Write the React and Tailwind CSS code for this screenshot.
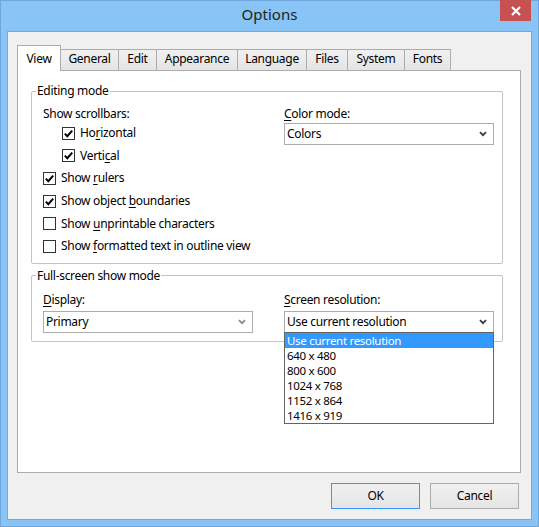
import { useState } from "react";

const tabs = [
  { name: "View", w: "w-[44px]" },
  { name: "General", w: "w-[58px]" },
  { name: "Edit", w: "w-[38px]" },
  { name: "Appearance", w: "w-[81px]" },
  { name: "Language", w: "w-[69px]" },
  { name: "Files", w: "w-[41px]" },
  { name: "System", w: "w-[57px]" },
  { name: "Fonts", w: "w-[46px]" },
];

const resolutions = ["Use current resolution", "640 x 480", "800 x 600", "1024 x 768", "1152 x 864", "1416 x 919"];

// label with one underlined access key
function Key({ text, at }) {
  return (
    <>
      {text.slice(0, at)}
      <span className="underline underline-offset-[2px] decoration-[1px]">{text[at]}</span>
      {text.slice(at + 1)}
    </>
  );
}

function Check({ checked, indent, text, at }) {
  return (
    <div className={`h-[22.6px] flex items-center gap-[5px] ${indent ? "pl-[19px]" : ""}`}>
      <span className="w-[13px] h-[13px] border border-[#333333] bg-white flex items-center justify-center shrink-0">
        {checked && (
          <svg width="11" height="11" viewBox="0 0 11 11">
            <path d="M1.8 5.6 L4.3 8.2 L9.2 2.6" stroke="#000" strokeWidth="2" fill="none" />
          </svg>
        )}
      </span>
      <span className="leading-[16px]">
        <Key text={text} at={at} />
      </span>
    </div>
  );
}

function Select({ value, arrow = "#3c3c3c", children }) {
  return (
    <div className="relative w-[210px] h-[22px] border border-[#abadb3] bg-white flex items-center pl-[2px] pr-[6px]">
      <span className="flex-1 leading-[16px]">{value}</span>
      <svg width="8" height="6" viewBox="0 0 8 6">
        <path d="M1 1.2 L4 4.2 L7 1.2" stroke={arrow} strokeWidth="1.8" fill="none" />
      </svg>
      {children}
    </div>
  );
}

export default function App() {
  const [tab, setTab] = useState("View");
  const [res, setRes] = useState(0);

  return (
    <div className="w-[539px] h-[527px] border border-[#6fa5d8] bg-[#88c4f5] flex flex-col px-[6px] pb-[6px] relative font-['Noto_Sans',sans-serif] text-[12px] tracking-[-0.3px] text-black select-none">
      <div className="h-[30px] flex items-center justify-center">
        <span className="text-[15px] text-[#222] leading-[20px] -mt-[4px] tracking-normal">Options</span>
      </div>
      <div className="absolute top-[-1px] right-[7px] w-[31px] h-[21px] bg-[#c75050] flex items-center justify-center">
        <svg width="10" height="10" viewBox="0 0 10 10">
          <path d="M1 1 L9 9 M9 1 L1 9" stroke="#fff" strokeWidth="2.2" />
        </svg>
      </div>

      <div className="flex-1 border border-[#79a6d2] bg-[#f0f0f0] flex flex-col pl-[9px] pt-[13px] pb-[10px]">
        <div className="flex items-end h-[25px]">
          {tabs.map((t, i) => {
            const on = t.name === tab;
            return (
              <button
                key={t.name}
                onClick={() => setTab(t.name)}
                className={`${t.w} flex items-center justify-center border-t border-r border-[#acacac] ${i === 0 ? "border-l" : ""} ${
                  on
                    ? "h-[26px] -mb-[1px] bg-white relative z-10"
                    : "h-[21px] pb-[2px] bg-gradient-to-b from-[#f0f0f0] to-[#e5e5e5]"
                }`}
              >
                <span className="leading-[16px]">{t.name}</span>
              </button>
            );
          })}
        </div>

        <div className="w-[504px] h-[403px] border border-[#acacac] bg-white pl-[13px] pt-[12px]">
          <fieldset className="w-[472px] border border-[#c4c4c4] rounded-[2px] m-0 p-0">
            <legend className="ml-[4px] px-[1px] leading-[16px]">Editing mode</legend>
            <div className="grid grid-cols-[241px_210px] pl-[11px] pt-[6px] pb-[5px]">
              <div>
                <div className="h-[17px] leading-[17px]">Show scrollbars:</div>
                <Check checked indent text="Horizontal" at={2} />
                <Check checked indent text="Vertical" at={5} />
                <Check checked text="Show rulers" at={5} />
                <Check checked text="Show object boundaries" at={12} />
                <Check text="Show unprintable characters" at={5} />
                <Check text="Show formatted text in outline view" at={5} />
              </div>
              <div>
                <div className="h-[17px] leading-[17px]">
                  <Key text="Color mode:" at={0} />
                </div>
                <div className="mt-[1px]">
                  <Select value="Colors" />
                </div>
              </div>
            </div>
          </fieldset>

          <fieldset className="w-[472px] border border-[#c4c4c4] rounded-[2px] m-0 p-0 mt-[4px]">
            <legend className="ml-[4px] px-[1px] leading-[16px]">Full-screen show mode</legend>
            <div className="grid grid-cols-[241px_210px] pl-[11px] pt-[8px] pb-[8px]">
              <div>
                <div className="h-[16px] leading-[16px]">
                  <Key text="Display:" at={0} />
                </div>
                <div className="mt-[3px]">
                  <Select value="Primary" arrow="#8a8a8a" />
                </div>
              </div>
              <div>
                <div className="h-[16px] leading-[16px]">
                  <Key text="Screen resolution:" at={0} />
                </div>
                <div className="mt-[3px]">
                  <Select value={resolutions[res]}>
                    <div className="absolute top-full -left-[1px] -right-[1px] z-20 border border-[#646464] bg-white text-[11.5px]">
                      {resolutions.map((r, i) => (
                        <div
                          key={r}
                          onMouseDown={() => setRes(i)}
                          className={`h-[15px] leading-[15px] pl-[2px] overflow-hidden ${i === res ? "bg-[#3399ff] text-white" : ""}`}
                        >
                          {r}
                        </div>
                      ))}
                    </div>
                  </Select>
                </div>
              </div>
            </div>
          </fieldset>
        </div>

        <div className="w-[504px] flex justify-end gap-[10px] pr-[2px] mt-[10px]">
          <button className="w-[89px] h-[26px] border border-[#3399ff] bg-gradient-to-b from-[#f0f0f0] to-[#e5e5e5]">OK</button>
          <button className="w-[89px] h-[26px] border border-[#acacac] bg-gradient-to-b from-[#f0f0f0] to-[#e5e5e5]">Cancel</button>
        </div>
      </div>
    </div>
  );
}
